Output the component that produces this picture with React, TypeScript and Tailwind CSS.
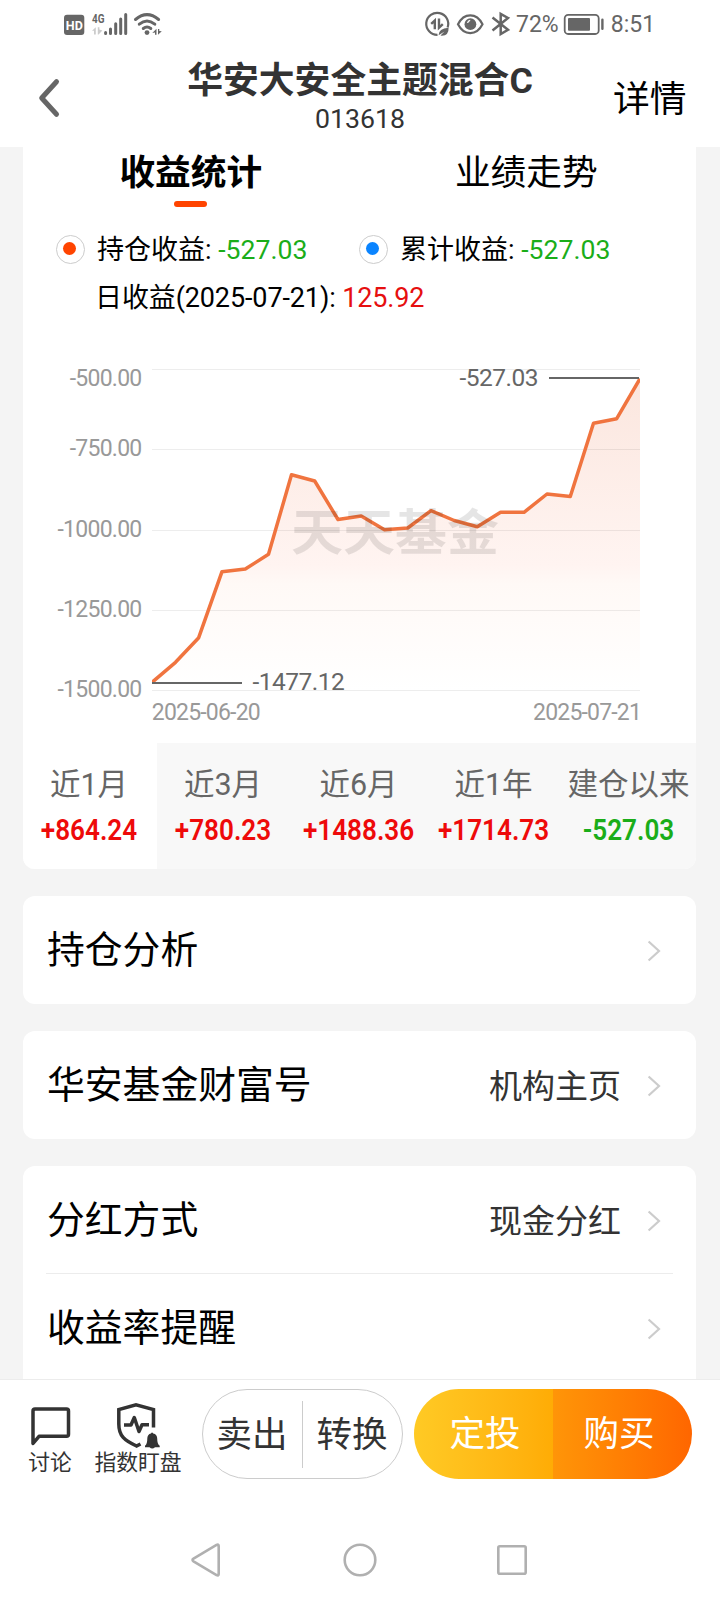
import { ReactNode } from "react";

// Yield curve, one point per trading day
const points = [
  [152, 682.3],
  [175.5, 662.3],
  [198.7, 637.7],
  [222, 571.7],
  [245.3, 569],
  [268.5, 554.3],
  [291.5, 474.7],
  [314.7, 481],
  [338, 519.5],
  [361.2, 516],
  [384.5, 529.7],
  [407.7, 528],
  [431, 510.7],
  [454.2, 520.5],
  [477.3, 526.7],
  [500.6, 512.3],
  [524, 512.3],
  [547, 494],
  [570.3, 496.5],
  [593.5, 423.3],
  [616.7, 418.7],
  [640, 378.7],
];

const gridLines = [
  { y: 369.5, textY: 386, label: "-500.00" },
  { y: 449.5, textY: 456, label: "-750.00" },
  { y: 530.5, textY: 537, label: "-1000.00" },
  { y: 610.5, textY: 617, label: "-1250.00" },
  { y: 690.5, textY: 697, label: "-1500.00" },
];

const periods = [
  { label: "近1月", value: "+864.24", up: true },
  { label: "近3月", value: "+780.23", up: true },
  { label: "近6月", value: "+1488.36", up: true },
  { label: "近1年", value: "+1714.73", up: true },
  { label: "建仓以来", value: "-527.03", up: false },
];

function StatusBar() {
  return (
    <div className="flex h-12 items-start text-[#666] text-[23px] leading-[50px]">
      {/* HD, signal, wifi */}
      <svg className="ml-[60px] h-12 w-[105px]" viewBox="60 0 105 48" fill="none">
        <rect x="64" y="14.7" width="20.3" height="20.3" rx="3" fill="#666" />
        <text x="65.8" y="30" fontSize="13.5" fontWeight="700" textLength="17" lengthAdjust="spacingAndGlyphs" fill="#fff">
          HD
        </text>
        <text x="92" y="23" fontSize="13" fontWeight="700" textLength="12.5" lengthAdjust="spacingAndGlyphs" fill="#666">
          4G
        </text>
        <path d="M92 30.8 L95.8 27.2 V34.6 H94 V30.8 Z M97.8 34.6 V27.2 H99.4 V29.6 L102.4 30.4 L98.6 34.6 Z" fill="#ccc" />
        <g stroke="#666" strokeWidth="3" strokeLinecap="round">
          <path d="M105.6 32.5 V33.4 M110.5 29 V33.4 M115.7 23.8 V33.4 M120.7 19 V33.4 M125.7 14.6 V33.4" />
          <path d="M135.5 19.5 Q147 9.8 158.6 19.5" />
          <path d="M139.3 24.2 Q147 17.8 154.8 24.2" />
          <path d="M143.3 28.5 Q147 25.5 150.8 28.5" />
        </g>
        <circle cx="147" cy="32.6" r="2.4" fill="#666" />
        <path d="M152.3 33 L156.5 28.8 V34.8 H155 V32.5 Z M158 34.8 V29 H159.3 V31 L161.8 31.3 Z" fill="#666" />
      </svg>
      <svg className="ml-[255px] h-12 w-[96px]" viewBox="420 0 96 48" fill="none" stroke="#666" strokeWidth="2.2">
        <path d="M447.6 27.5 A11 11 0 1 0 437.5 34.8" />
        <path d="M431.2 23.8 L434.8 20.5 V29.3 M439 18.5 V27.8 L442.8 24.2" strokeWidth="2.4" />
        <path d="M438.6 35.2 Q438.5 28.8 448.6 27.8 Q449 36.4 440.5 35.6 L444.5 31.5 Z" fill="#666" stroke="none" />
        <path d="M458 24.2 C464 12.4 476.5 12.4 482.5 24.2 C476.5 36 464 36 458 24.2 Z" />
        <circle cx="470.4" cy="24.2" r="5.9" fill="#666" stroke="none" />
        <path d="M467.6 23 Q468 20.8 470.2 20.4" stroke="#fff" strokeWidth="1.3" />
        <path d="M492.5 17.5 L508 29.8 L500.7 34 V13.8 L508 18 L492.5 30.5" strokeWidth="2.5" />
      </svg>
      <span>72%</span>
      <svg className="ml-[2px] h-12 w-[46px]" viewBox="561 0 46 48" fill="none">
        <rect x="564.7" y="14.8" width="34" height="19.2" rx="3.5" stroke="#666" strokeWidth="1.8" />
        <rect x="568" y="18" width="22" height="12.8" rx="1" fill="#666" />
        <path d="M602.4 19.8 V28.8" stroke="#666" strokeWidth="2.4" strokeLinecap="round" />
      </svg>
      <span className="ml-1">8:51</span>
    </div>
  );
}

function Header() {
  return (
    <div className="flex h-[99px] shrink-0">
      <svg className="h-[99px] w-[120px]" viewBox="0 48 120 99" fill="none">
        <path d="M56.5 81.7 L41.7 98 L56.5 114.3" stroke="#666" strokeWidth="5" strokeLinecap="round" strokeLinejoin="round" />
      </svg>
      <div className="flex flex-1 flex-col items-center text-[#333]">
        <h1 className="mt-[9px] text-[35.8px] leading-[48px] font-bold whitespace-nowrap">华安大安全主题混合C</h1>
        <div className="-mt-0.5 text-[26.7px] leading-[32px]">013618</div>
      </div>
      <div className="w-[120px] pt-[25px] pl-[13px] text-[36.8px] leading-[54px] text-black">详情</div>
    </div>
  );
}

function Radio({ children }: { children: ReactNode }) {
  return (
    <span className="-mt-0.5 flex size-[29px] items-center justify-center rounded-full border border-[#ccc] pr-0.5 pb-px">
      {children}
    </span>
  );
}

function Chart() {
  const line = points.map((p) => p.join(",")).join(" ");
  return (
    <svg className="block h-[413px] w-[673px]" viewBox="23 330 673 413" fill="none">
      <defs>
        <linearGradient id="area" x1="0" y1="378" x2="0" y2="690" gradientUnits="userSpaceOnUse">
          <stop offset="0" stopColor="#fbe6de" />
          <stop offset="0.6" stopColor="#fff4f1" />
          <stop offset="0.66" stopColor="#fff9f6" />
          <stop offset="1" stopColor="#fff" />
        </linearGradient>
        <clipPath id="plot">
          <rect x="152" y="369" width="488" height="322" />
        </clipPath>
      </defs>
      <polygon points={`152,690 ${line} 640,690`} fill="url(#area)" />
      {gridLines.map((g) => (
        <g key={g.label}>
          <path d={`M152 ${g.y} H640`} stroke="#000" strokeOpacity="0.07" />
          <text x="141.5" y={g.textY} fontSize="23" fill="#999" textAnchor="end" letterSpacing="-0.75">
            {g.label}
          </text>
        </g>
      ))}
      <polyline points={line} stroke="#f0743f" strokeWidth="3.5" strokeLinejoin="round" clipPath="url(#plot)" />
      <text
        transform="translate(291 550.3) scale(1 0.94)"
        fontSize="52"
        fontWeight="700"
        fill="#000"
        fillOpacity="0.1"
      >
        天天基金
      </text>
      <path d="M152 683 H242 M549 378 H639" stroke="#666" strokeWidth="2" />
      <g fontSize="24.5" fill="#666" letterSpacing="-0.5">
        <text x="252.5" y="689.5">-1477.12</text>
        <text x="459.5" y="386">-527.03</text>
      </g>
      <g fontSize="23" fill="#999" letterSpacing="-0.8">
        <text x="151.8" y="720">2025-06-20</text>
        <text x="533" y="720">2025-07-21</text>
      </g>
    </svg>
  );
}

function Row({ title, extra }: { title: string; extra?: string }) {
  return (
    <div className="flex h-[108px] items-center pt-0.5 pr-[35px] pl-6">
      <span className="flex-1 text-[37.8px] leading-none text-black">{title}</span>
      {extra && <span className="mr-[26px] text-[33px] leading-none text-[#333]">{extra}</span>}
      <svg className="h-[22px] w-[14px]" viewBox="0 0 14 22" fill="none">
        <path d="M1.6 1.5 L12 11 L1.6 20.5" stroke="#ccc" strokeWidth="2.2" />
      </svg>
    </div>
  );
}

function BottomBar() {
  return (
    <div className="flex h-[110px] shrink-0 items-start border-t border-[#ececec] pt-[9px] text-[#333]">
      <div className="ml-[21px] flex w-[58px] flex-col items-center">
        <svg className="h-[60px] w-[58px]" viewBox="21 1389 58 60" fill="none">
          <path
            d="M33 1443.5 V1411 Q33 1409 35 1409 H66.5 Q68.5 1409 68.5 1411 V1434.3 Q68.5 1436.3 66.5 1436.3 H39 Z"
            stroke="#333"
            strokeWidth="3.5"
            strokeLinejoin="round"
          />
        </svg>
        <span className="mt-px text-[21.8px] leading-[26px]">讨论</span>
      </div>
      <div className="ml-[9px] flex w-[100px] flex-col items-center">
        <svg className="h-[60px] w-[100px]" viewBox="88 1389 100 60" fill="none" stroke="#333" strokeWidth="3.5">
          <path d="M153.5 1427.5 V1409.5 L136 1404.8 L118.8 1409.5 V1424 C118.8 1436 124.5 1440.5 136.5 1446 L140.5 1444" />
          <path d="M124 1425 H131 L134.3 1417.5 L139 1431.5 L142 1424.8 H149" strokeLinejoin="round" />
          <path
            d="M145 1445.8 Q147.3 1444.3 147.3 1438.5 Q147.3 1434.2 151 1433.4 Q152 1431.6 153.2 1433.4 Q157.2 1434.2 157.2 1438.5 Q157.2 1444.3 159.7 1445.8 V1447.2 H155 Q152.3 1450 149.5 1447.2 H145 Z"
            fill="#333"
            stroke="none"
          />
        </svg>
        <span className="mt-px text-[21.8px] leading-[26px]">指数盯盘</span>
      </div>
      <div className="ml-[14px] flex h-[90px] w-[201px] items-center rounded-full border border-[#ccc] text-[35.5px]">
        <span className="flex-1 pt-[3px] pr-px text-center">卖出</span>
        <span className="h-[67px] w-px bg-[#ccc]" />
        <span className="flex-1 pt-[3px] pr-px text-center">转换</span>
      </div>
      <div className="ml-[11px] flex h-[90px] w-[278px] items-center overflow-hidden rounded-full text-[35.5px] leading-[91px] text-white">
        <span className="h-full w-[139px] bg-linear-to-r from-[#ffca24] to-[#ffac05] pl-[3px] text-center">定投</span>
        <span className="h-full w-[139px] bg-linear-to-r from-[#ff9508] to-[#ff6600] pr-[7px] text-center">购买</span>
      </div>
    </div>
  );
}

export default function App() {
  return (
    <div className="flex h-[1600px] w-[720px] flex-col overflow-hidden bg-white font-[Roboto,'Noto_Sans_CJK_SC',sans-serif]">
      <StatusBar />
      <Header />

      <main className="h-[1232px] shrink-0 overflow-hidden bg-[#f4f4f4] pr-6 pl-[23px]">
        <section className="overflow-hidden rounded-b-xl bg-white">
          {/* Tabs */}
          <div className="grid h-[72px] grid-cols-2 pr-0.5 text-center text-[35.7px] leading-[53px] text-black">
            <div className="flex flex-col items-center font-bold">
              收益统计
              <span className="mt-px h-1.5 w-[33px] rounded-full bg-[#ff4400]" />
            </div>
            <div>业绩走势</div>
          </div>

          {/* Totals */}
          <div className="h-[111px] pt-[7px] pl-[33px] text-[27px] leading-[48px] text-black">
            <div className="flex items-center">
              <Radio>
                <i className="size-[13px] rounded-full bg-[#ff4400]" />
              </Radio>
              <span className="ml-3 w-[262px]">
                持仓收益: <b className="text-[26.6px] font-normal text-[#1aad19]">-527.03</b>
              </span>
              <Radio>
                <i className="size-[13px] rounded-full bg-[#0a84ff]" />
              </Radio>
              <span className="ml-3">
                累计收益: <b className="text-[26.6px] font-normal text-[#1aad19]">-527.03</b>
              </span>
            </div>
            <div className="pl-[39px] tracking-[-0.12px]">
              日收益(2025-07-21): <span className="text-[#e60f0f]">125.92</span>
            </div>
          </div>

          <Chart />

          {/* Periods */}
          <div className="flex h-[126px] bg-[#f8f8f8] text-center whitespace-nowrap">
            {periods.map((p, i) => (
              <div key={p.label} className={i === 0 ? "w-[134px] bg-white pr-0.5" : i === 1 ? "w-[134px] pr-0.5" : "w-[135px]"}>
                <div className="pt-[20px] text-[30.5px] leading-[44px] text-[#666]">{p.label}</div>
                <div
                  className={
                    "mt-px scale-x-90 text-[29px] leading-[44px] font-semibold " +
                    (p.up ? "text-[#ee0a0a]" : "text-[#1aad19]")
                  }
                >
                  {p.value}
                </div>
              </div>
            ))}
          </div>
        </section>

        <section className="mt-[27px] rounded-xl bg-white">
          <Row title="持仓分析" />
        </section>
        <section className="mt-[27px] rounded-xl bg-white">
          <Row title="华安基金财富号" extra="机构主页" />
        </section>
        <section className="mt-[27px] rounded-t-xl bg-white">
          <Row title="分红方式" extra="现金分红" />
          <div className="mx-[23px] -mt-px h-px bg-[#ececec]" />
          <Row title="收益率提醒" />
        </section>
      </main>

      <BottomBar />

      {/* System navigation */}
      <svg className="h-[111px] w-[720px]" viewBox="0 1489 720 111" fill="none" stroke="#b0b0b0" strokeWidth="2.6">
        <path d="M193.5 1558.7 L216.5 1545 Q218.7 1544 218.7 1546 V1574 Q218.7 1576 216.5 1575 L193.5 1561.3 Q191.5 1560 193.5 1558.7 Z" />
        <circle cx="360" cy="1560" r="15.3" />
        <rect x="498.3" y="1546.3" width="27.4" height="27.4" rx="1.5" />
      </svg>
    </div>
  );
}
